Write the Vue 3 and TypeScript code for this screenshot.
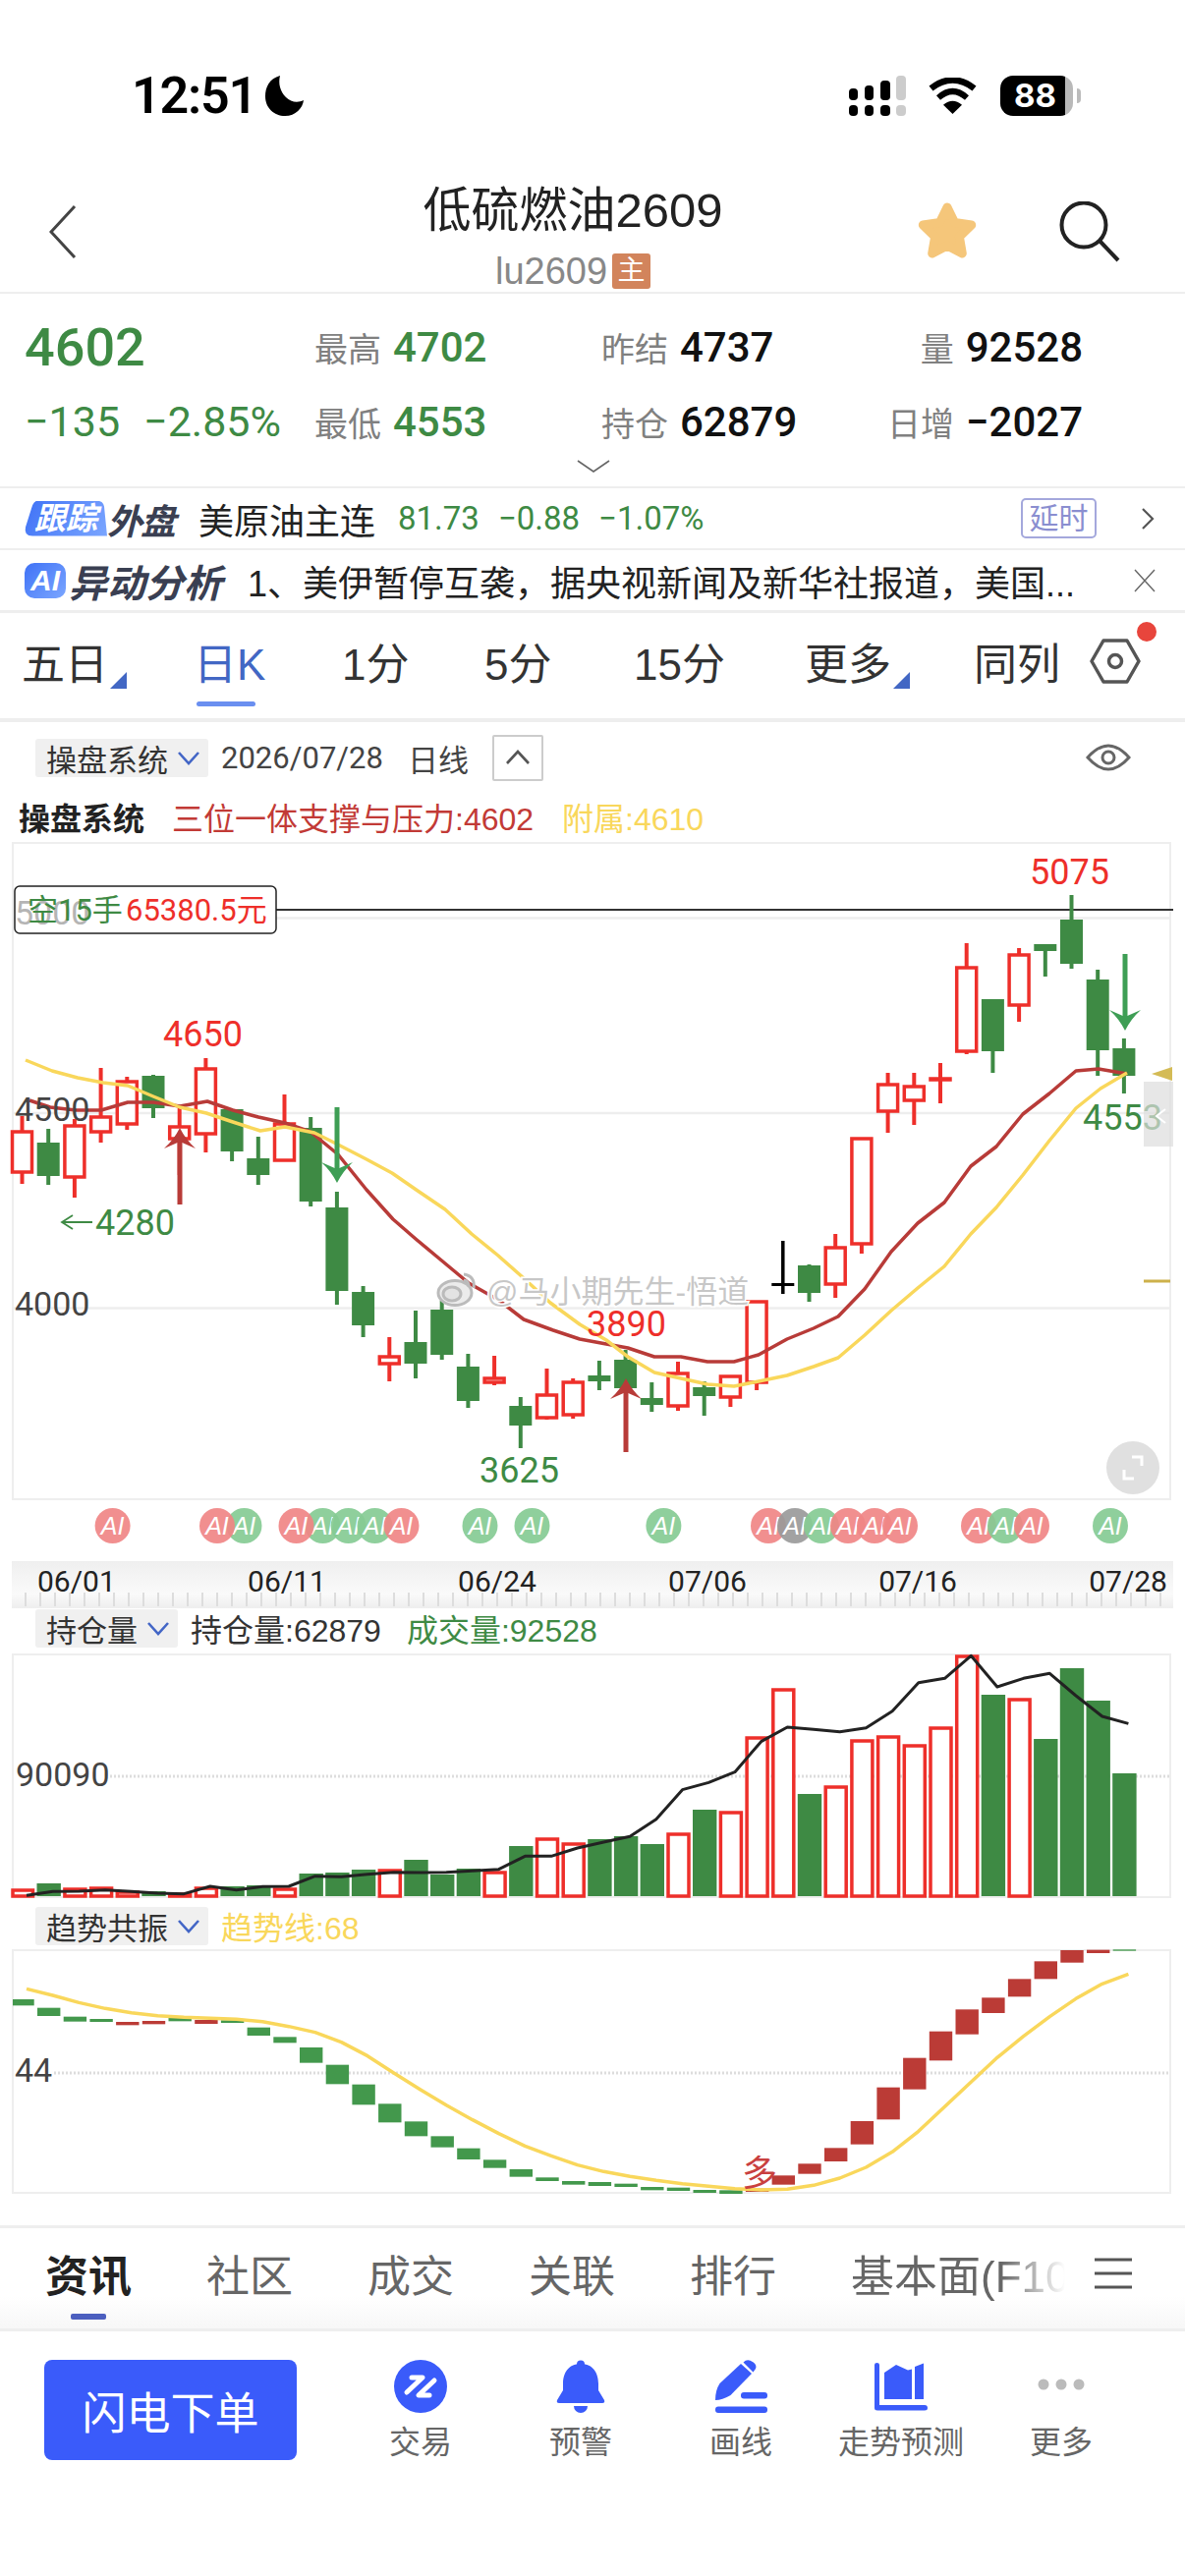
<template>
  <div class="page">
    <div class="status">
      <div class="status__left">
        <span class="status__time">12:51</span>
        <svg class="moon" width="40" height="41" viewBox="0 0 40 41">
          <path d="M15 0 C4 3 0 12 0 21 C0 33 9 41 20 41 C31 41 38 33 39 25 C33 28 26 27 21 22 C15 16 13 8 15 0 Z" />
        </svg>
      </div>
      <div class="status__right">
        <svg width="58" height="41" viewBox="0 0 58 41">
          <rect x="0" y="13" width="9" height="12" rx="4" />
          <rect x="16" y="10" width="9" height="15" rx="4" />
          <rect x="32" y="5" width="10" height="20" rx="4" />
          <rect x="48" y="0" width="10" height="25" rx="4" fill="#ccc" />
          <rect x="0" y="30" width="9" height="11" rx="4" />
          <rect x="16" y="30" width="9" height="11" rx="4" />
          <rect x="32" y="30" width="10" height="11" rx="4" />
          <rect x="48" y="30" width="10" height="11" rx="4" fill="#ccc" />
        </svg>
        <svg class="wifi" width="50" height="38" viewBox="0 0 50 38">
          <path d="M2.5 11 Q24.5 -6 46.5 11" fill="none" stroke="#000" stroke-width="6.5" />
          <path d="M10 20.5 Q24.5 7.5 39 20.5" fill="none" stroke="#000" stroke-width="6" />
          <path d="M24.5 37 L15 27.7 Q24.5 20 34 27.7 Z" />
        </svg>
        <div class="battery"><span>88</span></div>
        <i class="battery__nub"></i>
      </div>
    </div>

    <header class="nav">
      <div class="nav__back">
        <svg width="28" height="56" viewBox="0 0 28 56">
          <path d="M26 2 L2 28 L26 54" fill="none" stroke="#444" stroke-width="3" />
        </svg>
      </div>
      <div class="nav__title">
        <h1>低硫燃油2609</h1>
        <p>lu2609<span class="nav__tag">主</span></p>
      </div>
      <div class="nav__actions">
        <svg width="62" height="62" viewBox="0 0 62 62">
          <polygon
            points="31,6 38.6,21.5 55.7,24 43.4,36 46.3,53 31,45 15.7,53 18.6,36 6.3,24 23.4,21.5"
            fill="#F5C67A" stroke="#F5C67A" stroke-width="9" stroke-linejoin="round"
          />
        </svg>
        <svg width="62" height="62" viewBox="0 0 62 62">
          <circle cx="25" cy="24" r="22.5" fill="none" stroke="#222" stroke-width="4" />
          <path d="M41 40 L60 60" stroke="#222" stroke-width="4" />
        </svg>
      </div>
    </header>

    <section class="quote">
      <div class="quote__cell"><b class="num num--big up">4602</b></div>
      <div class="quote__cell"><span class="label">最高</span><b class="num up">4702</b></div>
      <div class="quote__cell"><span class="label">昨结</span><b class="num">4737</b></div>
      <div class="quote__cell quote__cell--end"><span class="label">量</span><b class="num">92528</b></div>
      <div class="quote__cell quote__cell--change">
        <b class="num num--mid up">−135</b><b class="num num--mid up">−2.85%</b>
      </div>
      <div class="quote__cell"><span class="label">最低</span><b class="num up">4553</b></div>
      <div class="quote__cell"><span class="label">持仓</span><b class="num">62879</b></div>
      <div class="quote__cell quote__cell--end"><span class="label">日增</span><b class="num">−2027</b></div>
      <svg class="quote__more" width="34" height="13" viewBox="0 0 34 13">
        <path d="M1 1 L17 12 L33 1" fill="none" stroke="#666" stroke-width="1.6" />
      </svg>
    </section>

    <div class="feed">
      <span class="feed__tag">跟踪</span>
      <span class="feed__head">外盘</span>
      <span class="feed__name">美原油主连</span>
      <span class="feed__nums"><em>81.73</em><em>−0.88</em><em>−1.07%</em></span>
      <span class="feed__delay">延时</span>
      <svg width="14" height="24" viewBox="0 0 14 24">
        <path d="M2 2 L12 12 L2 22" fill="none" stroke="#555" stroke-width="2.2" />
      </svg>
    </div>

    <div class="alert">
      <span class="alert__tag">AI</span>
      <span class="alert__head">异动分析</span>
      <span class="alert__text">1、美伊暂停互袭，据央视新闻及新华社报道，美国...</span>
      <svg width="24" height="24" viewBox="0 0 24 24">
        <path d="M2 1 L22 23 M22 1 L2 23" stroke="#666" stroke-width="1.4" fill="none" />
      </svg>
    </div>

    <nav class="periods">
      <span v-for="p in periods" :key="p.label" class="periods__item" :class="{ 'periods__item--on': p.active }">
        {{ p.label }}<i v-if="p.menu" class="periods__tri"></i>
      </span>
      <span class="periods__gear">
        <svg width="52" height="46" viewBox="0 0 52 46">
          <path d="M14 2 H38 L50 23 L38 44 H14 L2 23 Z" fill="none" stroke="#555" stroke-width="3.5" stroke-linejoin="round" />
          <circle cx="26" cy="23" r="6.5" fill="none" stroke="#555" stroke-width="3.5" />
        </svg>
        <i class="periods__dot"></i>
      </span>
    </nav>

    <div class="toolbar">
      <span class="picker">操盘系统<svg class="caret" width="24" height="15" viewBox="0 0 24 15"><path d="M2 2 L12 13 L22 2" fill="none" stroke="#4366c6" stroke-width="2.6" /></svg></span>
      <span class="toolbar__date">2026/07/28</span>
      <span class="toolbar__kind">日线</span>
      <span class="toolbar__up">
        <svg width="26" height="16" viewBox="0 0 26 16"><path d="M2 14 L13 2 L24 14" fill="none" stroke="#555" stroke-width="2.6" /></svg>
      </span>
      <svg class="toolbar__eye" width="46" height="30" viewBox="0 0 46 30">
        <path d="M2 15 Q23 -9 44 15 Q23 39 2 15 Z" fill="none" stroke="#666" stroke-width="3" />
        <circle cx="23" cy="15" r="6" fill="none" stroke="#666" stroke-width="3" />
      </svg>
    </div>

    <div class="legend">
      <span class="legend__name">操盘系统</span>
      <span class="legend__main">三位一体支撑与压力:4602</span>
      <span class="legend__sub">附属:4610</span>
    </div>

    <svg class="chart" width="1206" height="732" viewBox="0 856 1206 732">
      <rect x="13" y="857" width="1178" height="668" fill="#fff" stroke="#eee" stroke-width="2" />
      <line v-for="y in [933.6, 1132, 1330.6]" :key="y" x1="13" x2="1191" :y1="y" :y2="y" stroke="#eee" stroke-width="2.5" />
      <line x1="281" x2="1194" y1="925" y2="925" stroke="#333" stroke-width="2" />

      <g v-for="c in candles" :key="c.x">
        <line :x1="c.x" :x2="c.x" :y1="c.wt" :y2="c.wb" :stroke="c.color" :stroke-width="c.kind === 'k' ? 3.5 : 4" />
        <rect
          :x="c.x - c.half" :y="c.t" :width="c.half * 2" :height="c.b - c.t"
          :fill="c.kind === 'r' ? '#fff' : c.color"
          :stroke="c.kind === 'r' ? c.color : 'none'"
          stroke-width="3.5"
        />
      </g>

      <polyline :points="maRed" fill="none" stroke="#B83B38" stroke-width="3.5" stroke-linejoin="round" />
      <polyline :points="maYellow" fill="none" stroke="#F9D75B" stroke-width="3.5" stroke-linejoin="round" />

      <text x="15" y="1140" class="axis">4500</text>
      <text x="15" y="1338" class="axis">4000</text>

      <g v-for="a in arrows" :key="a.x + '-' + a.tip">
        <line :x1="a.x" :x2="a.x" :y1="a.tail" :y2="a.tip" :stroke="a.color" stroke-width="5" />
        <path :d="a.head" :fill="a.color" />
      </g>

      <g>
        <rect x="15" y="901" width="266" height="48" rx="5" fill="#fff" stroke="#222" stroke-width="1.5" />
        <text x="15" y="940" class="axis axis--faded">5000</text>
        <text x="28" y="936" class="tag tag--green">空15手</text>
        <text x="128" y="936" class="tag tag--red">65380.5元</text>
      </g>

      <text x="166" y="1064" class="mark mark--red">4650</text>
      <text x="1048" y="899" class="mark mark--red">5075</text>
      <text x="597" y="1359" class="mark mark--red">3890</text>
      <text x="488" y="1508" class="mark mark--green">3625</text>
      <text x="97" y="1256" class="mark mark--green">4280</text>
      <path d="M94 1243 H64 M74 1236 L63 1243 L74 1250" fill="none" stroke="#3E8A44" stroke-width="1.8" />

      <g class="weibo">
        <ellipse cx="463" cy="1315" rx="17" ry="12.5" />
        <ellipse cx="460" cy="1316" rx="9" ry="7" />
        <path d="M472 1296 Q484 1298 482 1310 M472 1302 Q478 1303 477 1309" fill="none" />
      </g>
      <text x="495" y="1325" class="watermark">@马小期先生-悟道</text>

      <text x="1102" y="1149" class="mark mark--green">4553</text>
      <rect x="1164" y="1100" width="30" height="66" fill="#ddd" opacity=".7" />
      <path d="M1186 1128 L1177 1135 L1186 1142" fill="none" stroke="#fff" stroke-width="2" />
      <path d="M1172 1092 L1193 1085 V1099 Z" fill="#D4BB55" />
      <line x1="1164" x2="1191" y1="1303" y2="1303" stroke="#CDB14A" stroke-width="3" />

      <circle cx="1153" cy="1493" r="27" fill="#e0e0e0" />
      <path d="M1144 1495 V1504 H1154 M1162 1491 V1482 H1152" fill="none" stroke="#fff" stroke-width="3" />

      <g v-for="s in signals" :key="s.x">
        <circle :cx="s.x" cy="1552" r="18" :fill="s.color" fill-opacity=".92" />
        <text :x="s.x" y="1561" class="ai" text-anchor="middle">AI</text>
      </g>
    </svg>

    <div class="dates">
      <span v-for="d in dates" :key="d">{{ d }}</span>
    </div>

    <div class="indicator">
      <span class="picker">持仓量<svg class="caret" width="24" height="15" viewBox="0 0 24 15"><path d="M2 2 L12 13 L22 2" fill="none" stroke="#4366c6" stroke-width="2.6" /></svg></span>
      <span class="indicator__a">持仓量:62879</span>
      <span class="indicator__b">成交量:92528</span>
    </div>

    <svg class="chart" width="1206" height="259" viewBox="0 1682 1206 259">
      <rect x="13" y="1683" width="1178" height="247" fill="#fff" stroke="#eee" stroke-width="2" />
      <line x1="112" x2="1191" y1="1807" y2="1807" stroke="#ddd" stroke-width="3" stroke-dasharray="2 2" />
      <text x="16" y="1817" class="axis">90090</text>
      <rect
        v-for="b in volumes" :key="b.x"
        :x="b.x" :y="b.y" :width="b.w" :height="b.h"
        :fill="b.up ? '#fff' : '#3E8A44'"
        :stroke="b.up ? '#EE2F2A' : 'none'" stroke-width="3.5"
      />
      <polyline :points="holdLine" fill="none" stroke="#222" stroke-width="3" stroke-linejoin="round" />
    </svg>

    <div class="indicator indicator--trend">
      <span class="picker">趋势共振<svg class="caret" width="24" height="15" viewBox="0 0 24 15"><path d="M2 2 L12 13 L22 2" fill="none" stroke="#4366c6" stroke-width="2.6" /></svg></span>
      <span class="indicator__c">趋势线:68</span>
    </div>

    <svg class="chart" width="1206" height="281" viewBox="0 1983 1206 281">
      <rect x="13" y="1984" width="1178" height="247" fill="#fff" stroke="#eee" stroke-width="2" />
      <line x1="55" x2="1191" y1="2109" y2="2109" stroke="#ddd" stroke-width="3" stroke-dasharray="2 2" />
      <text x="15" y="2118" class="axis">44</text>
      <rect v-for="b in trendBars" :key="b.x" :x="b.x" :y="b.y" :width="b.w" :height="b.h" :fill="b.color" />
      <polyline :points="trendLine" fill="none" stroke="#F9D75B" stroke-width="3.5" stroke-linejoin="round" />
      <text x="755" y="2224" class="more">多</text>
    </svg>

    <div class="tabs">
      <span v-for="(t, i) in tabs" :key="t" class="tabs__item" :class="{ 'tabs__item--on': i === 0, 'tabs__item--fade': i === tabs.length - 1 }">{{ t }}</span>
      <svg class="tabs__menu" width="38" height="32" viewBox="0 0 38 32">
        <path d="M0 2 H38 M0 16 H38 M0 30 H38" stroke="#555" stroke-width="3" />
      </svg>
    </div>

    <div class="actions">
      <button class="actions__buy" type="button">闪电下单</button>
      <div v-for="(a, i) in actions" :key="a" class="actions__item">
        <svg class="actions__icon" width="54" height="54" viewBox="0 0 54 54">
          <g v-if="i === 0">
            <circle cx="27" cy="27" r="27" fill="#3A5BFA" />
            <path d="M18 18 H29 L13 33 M41 21 L25 36 H36" fill="none" stroke="#fff" stroke-width="5" stroke-linecap="round" stroke-linejoin="round" />
          </g>
          <g v-else-if="i === 1" fill="#3A5BFA">
            <circle cx="27" cy="4.5" r="4" />
            <path d="M27 4 C14 4 9 14 9 24 V31 L3 41 Q2 44 5 44 H49 Q52 44 51 41 L45 31 V24 C45 14 40 4 27 4 Z" />
            <path d="M20 47 H34 A7 7 0 0 1 20 47 Z" />
          </g>
          <g v-else-if="i === 2" fill="#3A5BFA">
            <path d="M5.5 24 L27 4 L38 14 L16.5 36 Q8 41 1 41 Q1 31 5.5 24 Z" />
            <path d="M29.5 2.5 Q33 -1 37 1 Q44 4 42 9 L39.5 12.5 Z" />
            <rect x="27" y="33" width="27" height="6.5" rx="3" />
            <rect x="1" y="47.5" width="53" height="6.5" rx="3" />
          </g>
          <g v-else-if="i === 3" fill="#3A5BFA">
            <path d="M0 5 Q0 3 2.5 3 Q5 3 5 5 V46 H51 Q54 46 54 49 Q54 51.5 51 51.5 H3 Q0 51.5 0 49 Z" />
            <path d="M10 13 L22 5 L34 10.5 L38 9.5 V40 H10 Z" />
            <path d="M41 7 L50 3.5 V40 H41 Z" />
          </g>
          <g v-else fill="#BBB">
            <circle cx="9" cy="25" r="5.5" />
            <circle cx="27" cy="25" r="5.5" />
            <circle cx="45" cy="25" r="5.5" />
          </g>
        </svg>
        <span>{{ a }}</span>
      </div>
    </div>
  </div>
</template>

<script setup lang="ts">
type Kind = "r" | "g" | "k";

const RED = "#EE2F2A";
const GREEN = "#3E8A44";

const periods = [
  { label: "五日", menu: true },
  { label: "日K", active: true },
  { label: "1分" },
  { label: "5分" },
  { label: "15分" },
  { label: "更多", menu: true },
  { label: "同列" },
];

const dates = ["06/01", "06/11", "06/24", "07/06", "07/16", "07/28"];
const tabs = ["资讯", "社区", "成交", "关联", "排行", "基本面(F10"];
const actions = ["交易", "预警", "画线", "走势预测", "更多"];

// body top, body bottom, wick top, wick bottom, kind
const rawCandles: [number, number, number, number, Kind][] = [
  [1151, 1192, 1135, 1204, "r"],
  [1162, 1196, 1148, 1205, "g"],
  [1145, 1197, 1138, 1218, "r"],
  [1136, 1151, 1086, 1162, "r"],
  [1100, 1143, 1095, 1149, "r"],
  [1094, 1127, 1093, 1137, "g"],
  [1146, 1158, 1127, 1195, "r"],
  [1087, 1153, 1076, 1172, "r"],
  [1128, 1171, 1128, 1181, "g"],
  [1178, 1195, 1156, 1205, "g"],
  [1143, 1180, 1113, 1180, "r"],
  [1147, 1222, 1136, 1227, "g"],
  [1228, 1313, 1212, 1327, "g"],
  [1314, 1348, 1308, 1360, "g"],
  [1380, 1387, 1360, 1405, "r"],
  [1365, 1387, 1333, 1402, "g"],
  [1332, 1378, 1323, 1383, "g"],
  [1390, 1425, 1377, 1432, "g"],
  [1402, 1406, 1379, 1409, "r"],
  [1430, 1450, 1421, 1473, "g"],
  [1419, 1442, 1392, 1444, "r"],
  [1406, 1439, 1402, 1443, "r"],
  [1399, 1405, 1384, 1414, "g"],
  [1383, 1412, 1373, 1414, "g"],
  [1422, 1429, 1406, 1436, "g"],
  [1397, 1430, 1385, 1435, "r"],
  [1411, 1420, 1405, 1440, "g"],
  [1400, 1421, 1400, 1431, "r"],
  [1324, 1406, 1323, 1414, "r"],
  [1305, 1308, 1262, 1316, "k"],
  [1287, 1315, 1286, 1324, "g"],
  [1269, 1306, 1255, 1320, "r"],
  [1158, 1265, 1157, 1275, "r"],
  [1103, 1130, 1091, 1152, "r"],
  [1105, 1119, 1091, 1144, "r"],
  [1097, 1098, 1081, 1122, "r"],
  [984, 1069, 959, 1072, "r"],
  [1016, 1069, 1016, 1091, "g"],
  [971, 1022, 964, 1039, "r"],
  [960, 967, 960, 993, "g"],
  [935, 980, 910, 985, "g"],
  [996, 1068, 986, 1094, "g"],
  [1066, 1094, 1056, 1112, "g"],
];

const candles = rawCandles.map(([t, b, wt, wb, kind], i) => ({
  x: 22.5 + 26.7 * i,
  half: kind === "r" ? 10 : 11.5,
  t,
  b,
  wt,
  wb,
  kind,
  color: kind === "r" ? RED : kind === "g" ? GREEN : "#000",
}));

const maRed = "30,1119 51,1126 77,1129 103,1129 130,1121 156,1121 183,1125 211,1120 237,1129 263,1136 290,1142 316,1151 344,1174 373,1210 400,1240 423,1260 447,1280 477,1305 507,1322 533,1342 563,1353 590,1362 617,1367 639,1371 666,1380 693,1380 720,1385 747,1385 772,1378 801,1362 828,1351 853,1339 880,1311 907,1273 934,1244 961,1223 988,1186 1014,1166 1041,1133 1068,1112 1095,1089 1118,1087 1147,1092";
const maYellow = "26,1078 53,1089 79,1096 105,1101 130,1104 156,1115 183,1126 210,1132 237,1141 265,1150 290,1146 320,1152 344,1164 373,1179 399,1193 425,1211 453,1230 480,1255 507,1277 533,1300 560,1325 590,1347 617,1363 639,1380 666,1396 693,1402 720,1408 747,1410 772,1405 801,1399 828,1390 853,1381 880,1358 907,1333 934,1310 961,1288 988,1255 1014,1228 1041,1195 1068,1160 1095,1127 1120,1107 1147,1091";

function arrow(x: number, tail: number, tip: number, color: string) {
  const dir = tip > tail ? -1 : 1;
  const wing = tip + dir * 21;
  const neck = tip + dir * 12;
  return {
    x,
    tail,
    tip: neck,
    color,
    head: `M${x - 16} ${wing} Q${x - 6} ${neck} ${x} ${tip} Q${x + 6} ${neck} ${x + 16} ${wing} L${x} ${tip + dir * 14} Z`,
  };
}

const arrows = [
  arrow(183, 1225, 1147, "#B83B38"),
  arrow(637, 1477, 1402, "#B83B38"),
  arrow(343, 1126, 1203, "#3E9E55"),
  arrow(1145, 970, 1048, "#3E9E55"),
];

const AI_RED = "#F08686";
const AI_GREEN = "#86CB94";
const AI_GRAY = "#9a9a9a";
const signals = [
  [114.6, AI_RED], [248.5, AI_GREEN], [221, AI_RED], [328.5, AI_GREEN], [301.5, AI_RED],
  [354.6, AI_GREEN], [381.5, AI_GREEN], [408.5, AI_RED], [488.5, AI_GREEN], [541.5, AI_GREEN],
  [675.4, AI_GREEN], [782, AI_RED], [809, AI_GRAY], [836, AI_GREEN], [863, AI_RED], [890, AI_RED],
  [916, AI_RED], [996, AI_RED], [1023, AI_GREEN], [1050, AI_RED], [1130, AI_GREEN],
].map(([x, color]) => ({ x: x as number, color: color as string }));

// volume bars: top y as read from the reference, r = hollow red
const rawVolumes: [number, Kind][] = [
  [1921, "r"], [1916, "g"], [1920, "r"], [1919, "r"], [1923, "r"], [1924, "g"], [1925, "r"], [1919, "r"],
  [1919, "g"], [1918, "g"], [1920, "r"], [1906, "g"], [1905, "g"], [1902, "g"], [1901, "r"], [1892, "g"],
  [1907, "g"], [1901, "g"], [1903, "r"], [1878, "g"], [1869, "r"], [1874, "r"], [1871, "g"], [1868, "g"],
  [1876, "g"], [1864, "r"], [1841, "g"], [1842, "r"], [1766, "r"], [1717, "r"], [1825, "g"], [1816, "r"],
  [1769, "r"], [1765, "r"], [1774, "r"], [1756, "r"], [1683, "r"], [1724, "g"], [1727, "r"], [1769, "g"],
  [1697, "g"], [1730, "g"], [1804, "g"],
];
const volumes = rawVolumes.map(([top, kind], i) => {
  const up = kind === "r";
  const center = 23 + 26.7 * i;
  const left = Math.max(13, center - (up ? 10.5 : 12.2));
  const right = center + (up ? 10.5 : 12.2);
  return { x: left, y: top + (up ? 2 : 0), w: right - left, h: 1929 - top - (up ? 2 : 0), up };
});

const holdLine = [
  1285, 1273, 1272, 1268, 1273, 1278, 1280, 1257, 1268, 1258, 1257, 1226, 1228, 1220, 1214, 1215, 1214, 1210,
  1205, 1165, 1165, 1140, 1122, 1105, 1052, 962, 940, 908, 815, 771, 778, 785, 773, 722, 635, 622, 553, 648,
  622, 607, 675, 738, 760,
].map((v, i) => `${27 + 26.7 * i},${1500 + v / 3}`).join(" ");

// trend bars: top and bottom in the 3x crop of the reference starting at y=1960
const rawTrend: [number, number, Kind][] = [
  [222, 241, "g"], [248, 273, "g"], [275, 290, "g"], [282, 291, "g"], [291, 301, "r"], [288, 298, "r"],
  [279, 289, "g"], [285, 297, "r"], [286, 294, "g"], [308, 333, "g"], [337, 355, "g"], [369, 416, "g"],
  [422, 481, "g"], [482, 544, "g"], [541, 598, "g"], [595, 640, "g"], [640, 674, "g"], [677, 711, "g"],
  [712, 737, "g"], [741, 764, "g"], [766, 777, "g"], [777, 788, "g"], [780, 792, "g"], [785, 795, "g"],
  [795, 805, "g"], [797, 807, "g"], [804, 813, "g"], [805, 816, "g"], [800, 810, "r"], [760, 788, "r"],
  [724, 755, "r"], [676, 717, "r"], [594, 665, "r"], [491, 589, "r"], [401, 497, "r"], [320, 409, "r"],
  [253, 329, "r"], [217, 264, "r"], [160, 214, "r"], [106, 160, "r"], [72, 110, "r"], [71, 81, "r"], [70, 74, "g"],
];
const trendBars = rawTrend.map(([t, b, kind], i) => {
  const center = 23 + 26.7 * i;
  const left = Math.max(13, center - 11.7);
  return {
    x: left,
    y: 1960 + t / 3,
    w: center + 11.7 - left,
    h: (b - t) / 3,
    color: kind === "r" ? "#BB3B36" : "#43984C",
  };
});

const trendLine = [
  190, 210, 232, 250, 263, 272, 277, 280, 283, 290, 305, 323, 353, 395, 447, 497, 545, 590, 632, 670, 700, 728,
  748, 763, 775, 785, 793, 800, 804, 802, 790, 768, 735, 688, 625, 550, 475, 400, 335, 275, 220, 175, 145,
].map((v, i) => `${27 + 26.7 * i},${1960 + v / 3}`).join(" ");
</script>

<style>
html,
body {
  margin: 0;
  background: #fff;
}
</style>

<style scoped>
.page {
  width: 1206px;
  height: 2622px;
  overflow: hidden;
  background: #fff;
  color: #222;
  font-family: "Liberation Sans", "Noto Sans CJK SC", sans-serif;
}

.status {
  display: flex;
  justify-content: space-between;
  align-items: flex-start;
  box-sizing: border-box;
  height: 170px;
  padding: 77px 106px 0 134px;
}

.status__left {
  display: flex;
  align-items: center;
  gap: 9px;
}

.status__time {
  font-family: Roboto, sans-serif;
  font-size: 52px;
  line-height: 41px;
  font-weight: 600;
  letter-spacing: -1.2px;
  color: #000;
}

.status__right {
  display: flex;
  align-items: flex-start;
}

.wifi {
  margin: 2px 23px 0 23px;
}

.battery {
  box-sizing: border-box;
  width: 74px;
  height: 41px;
  border-radius: 13px;
  background: linear-gradient(90deg, #000 0, #000 66px, #b9b9b9 66px);
  color: #fff;
  font-family: Inter, sans-serif;
  font-size: 33px;
  font-weight: 700;
  line-height: 41px;
  padding-left: 14px;
}

.battery__nub {
  display: block;
  width: 4px;
  height: 15px;
  margin: 13px 0 0 4px;
  border-radius: 0 8px 8px 0;
  background: #bbb;
}

.nav {
  display: grid;
  grid-template-columns: 383px 400px 1fr;
  box-sizing: border-box;
  height: 129px;
  border-bottom: 2px solid #eee;
}

.nav__back {
  padding: 38px 0 0 50px;
}

.nav__title {
  text-align: center;
}

.nav__title h1 {
  margin: 14px 0 0;
  font-size: 49px;
  line-height: 60px;
  font-weight: 400;
  color: #222;
}

.nav__title p {
  display: flex;
  justify-content: center;
  align-items: center;
  gap: 5px;
  margin: 13px 0 0;
  font-size: 38px;
  line-height: 38px;
  color: #888;
}

.nav__tag {
  width: 39px;
  height: 36px;
  border-radius: 3px;
  background: #D2845C;
  color: #fff;
  font-size: 28px;
  line-height: 36px;
  text-align: center;
}

.nav__actions {
  display: flex;
  gap: 83px;
  align-items: flex-start;
  padding: 35px 0 0 150px;
}

.quote {
  display: grid;
  grid-template-columns: 295px 292px 292px 198px;
  grid-auto-rows: 76px;
  position: relative;
  box-sizing: border-box;
  height: 198px;
  padding: 16px 0 0 25px;
  border-bottom: 2px solid #eee;
}

.quote__cell {
  display: flex;
  align-items: center;
  gap: 12px;
}

.quote__cell--end {
  justify-content: flex-end;
}

.quote__cell--change {
  gap: 24px;
}

.quote__more {
  position: absolute;
  left: 587px;
  top: 169px;
}

.label {
  flex: none;
  font-size: 34px;
  color: #808080;
}

.num {
  font-family: Roboto, sans-serif;
  font-size: 42px;
  font-weight: 500;
  color: #111;
}

.num--big {
  font-size: 54px;
  color: #3E8A44;
}

.num--mid {
  font-size: 43px;
  font-weight: 400;
  color: #3E8A44;
}

.up {
  color: #3E8A44;
}

.feed,
.alert {
  display: flex;
  align-items: center;
  box-sizing: border-box;
  padding-left: 25px;
  border-bottom: 2px solid #eee;
}

.feed {
  height: 63px;
}

.feed__tag {
  width: 84px;
  height: 36px;
  background: linear-gradient(120deg, #3f72f6, #7ba6ff);
  clip-path: path("M14 0 H73 Q80 0 81 6 L84 36 H8 Q-1 36 1 27 L7 8 Q9 0 14 0 Z");
  color: #fff;
  font-size: 32px;
  font-weight: 700;
  font-style: italic;
  line-height: 36px;
  text-align: center;
}

.feed__head {
  width: 93px;
  font-size: 36px;
  font-weight: 700;
  font-style: italic;
  color: #3a3f52;
  letter-spacing: -2px;
}

.feed__name {
  width: 203px;
  font-size: 36px;
  color: #222;
}

.feed__nums {
  display: flex;
  gap: 19px;
  width: 634px;
  font-family: Roboto, sans-serif;
  font-size: 33px;
  color: #3E8A44;
}

.feed__nums em {
  font-style: normal;
}

.feed__delay {
  box-sizing: border-box;
  width: 77px;
  height: 41px;
  margin-right: 45px;
  border: 2px solid #a4a8dc;
  border-radius: 5px;
  color: #8a8ed0;
  font-size: 30px;
  line-height: 37px;
  text-align: center;
}

.alert {
  height: 64px;
  border-bottom-width: 3px;
}

.alert__tag {
  width: 42px;
  height: 36px;
  border-radius: 10px;
  background: linear-gradient(135deg, #3f72f6, #7ba6ff);
  color: #fff;
  font-size: 30px;
  font-weight: 700;
  font-style: italic;
  line-height: 36px;
  text-align: center;
}

.alert__head {
  margin-left: 3px;
  width: 182px;
  font-size: 39px;
  font-weight: 700;
  font-style: italic;
  color: #3a3f52;
}

.alert__text {
  width: 901px;
  font-size: 36px;
  color: #222;
  white-space: nowrap;
}

.periods {
  display: grid;
  grid-template-columns: 175px 151px 145px 152px 174px 172px 121px 1fr;
  align-items: center;
  box-sizing: border-box;
  height: 111px;
  padding: 0 0 10px 22px;
  border-bottom: 4px solid #eee;
}

.periods__item {
  position: relative;
  font-size: 44px;
  color: #333;
}

.periods__item--on {
  color: #4267c4;
}

.periods__item--on::after {
  content: "";
  position: absolute;
  left: 3px;
  bottom: -14px;
  width: 60px;
  height: 5px;
  border-radius: 3px;
  background: #6a8ff0;
}

.periods__tri {
  position: absolute;
  left: 90px;
  bottom: 4px;
  border-style: solid;
  border-width: 0 0 17px 17px;
  border-color: transparent transparent #4267c4 transparent;
}

.periods__gear {
  position: relative;
  display: block;
  height: 46px;
  margin-left: -3px;
}

.periods__dot {
  position: absolute;
  left: 48px;
  top: -17px;
  width: 20px;
  height: 20px;
  border-radius: 50%;
  background: #e8453c;
}

.toolbar {
  display: flex;
  align-items: center;
  box-sizing: border-box;
  height: 72px;
  padding: 0 0 0 36px;
}

.picker {
  display: inline-flex;
  align-items: center;
  gap: 9px;
  box-sizing: border-box;
  height: 39px;
  padding: 0 8px 0 11px;
  border-radius: 3px;
  background: #f0f0f0;
  color: #333;
  font-size: 31px;
}

.toolbar__date {
  margin-left: 13px;
  font-family: Roboto, sans-serif;
  font-size: 31px;
  color: #444;
}

.toolbar__kind {
  margin-left: 25px;
  font-size: 31px;
  color: #444;
}

.toolbar__up {
  display: flex;
  align-items: center;
  justify-content: center;
  box-sizing: border-box;
  width: 52px;
  height: 47px;
  margin-left: 24px;
  border: 2px solid #ccc;
  border-radius: 2px;
}

.toolbar__eye {
  margin-left: auto;
  margin-right: 55px;
}

.legend {
  display: flex;
  align-items: center;
  box-sizing: border-box;
  height: 50px;
  padding: 0 0 2px 19px;
  font-size: 32px;
}

.legend__name {
  color: #222;
  font-weight: 700;
  width: 156px;
}

.legend__main {
  width: 397px;
  color: #C23A36;
}

.legend__sub {
  color: #F9D75B;
}

.chart {
  display: block;
}

.axis {
  font-family: Roboto, sans-serif;
  font-size: 34px;
  fill: #444;
}

.axis--faded {
  fill: #b5b5b5;
}

.tag {
  font-family: Roboto, "Noto Sans CJK SC", sans-serif;
  font-size: 31px;
}

.tag--green {
  fill: #3E8A44;
}

.tag--red {
  fill: #EE2F2A;
}

.mark {
  font-family: Roboto, sans-serif;
  font-size: 36px;
  font-weight: 400;
}

.mark--red {
  fill: #EE2F2A;
}

.mark--green {
  fill: #3E8A44;
}

.more {
  font-size: 36px;
  fill: #C94040;
}

.watermark {
  font-size: 32px;
  fill: #b5b5b5;
  fill-opacity: 0.75;
  stroke: #fff;
  stroke-width: 3px;
  paint-order: stroke;
}

.weibo {
  fill: #ddd;
  fill-opacity: 0.6;
  stroke: #bbb;
  stroke-width: 3px;
}

.ai {
  font-family: "Liberation Sans", sans-serif;
  font-size: 25px;
  font-style: italic;
  fill: #fff;
}

.dates {
  display: flex;
  justify-content: space-between;
  box-sizing: border-box;
  width: 1182px;
  height: 48px;
  margin-left: 12px;
  padding: 4px 6px 0 26px;
  background:
    repeating-linear-gradient(90deg, transparent 0, transparent 13px, #ddd 13px, #ddd 15px) left 32px / 100% 14px no-repeat,
    linear-gradient(180deg, #efefef, #fafafa 70%, #eee);
  font-family: Roboto, sans-serif;
  font-size: 30px;
  line-height: 34px;
  color: #222;
}

.indicator {
  display: flex;
  align-items: center;
  box-sizing: border-box;
  height: 46px;
  padding: 0 0 6px 36px;
  font-size: 32px;
}

.indicator--trend {
  height: 42px;
  padding-bottom: 6px;
}

.indicator__a {
  margin-left: 13px;
  color: #333;
}

.indicator__b {
  margin-left: 26px;
  color: #3E8A44;
}

.indicator__c {
  margin-left: 13px;
  color: #F9D75B;
}

.tabs {
  position: relative;
  display: grid;
  grid-template-columns: repeat(5, 164px) 248px 1fr;
  align-items: center;
  box-sizing: border-box;
  height: 108px;
  padding: 0 0 10px 46px;
  border-top: 3px solid #eee;
  border-bottom: 3px solid #eee;
  background: linear-gradient(180deg, #fff 68%, #f7f7f7);
}

.tabs__item {
  position: relative;
  font-size: 44px;
  color: #666;
}

.tabs__item--on {
  color: #222;
  font-weight: 700;
}

.tabs__item--on::after {
  content: "";
  position: absolute;
  left: 26px;
  bottom: -15px;
  width: 36px;
  height: 6px;
  border-radius: 2px;
  background: #4C5FBF;
}

.tabs__item--fade {
  width: 218px;
  overflow: hidden;
  white-space: nowrap;
  -webkit-mask-image: linear-gradient(90deg, #000 70%, transparent 100%);
  mask-image: linear-gradient(90deg, #000 70%, transparent 100%);
}

.actions {
  display: flex;
  align-items: flex-start;
  padding: 29px 0 0 45px;
}

.actions__buy {
  width: 257px;
  height: 102px;
  margin-right: 44.5px;
  padding: 0;
  border: 0;
  border-radius: 8px;
  background: #3A5BFA;
  color: #fff;
  font-family: inherit;
  font-size: 45px;
}

.actions__item {
  display: flex;
  flex-direction: column;
  align-items: center;
  gap: 10px;
  width: 163px;
  font-size: 32px;
  line-height: 40px;
  color: #666;
}
</style>
